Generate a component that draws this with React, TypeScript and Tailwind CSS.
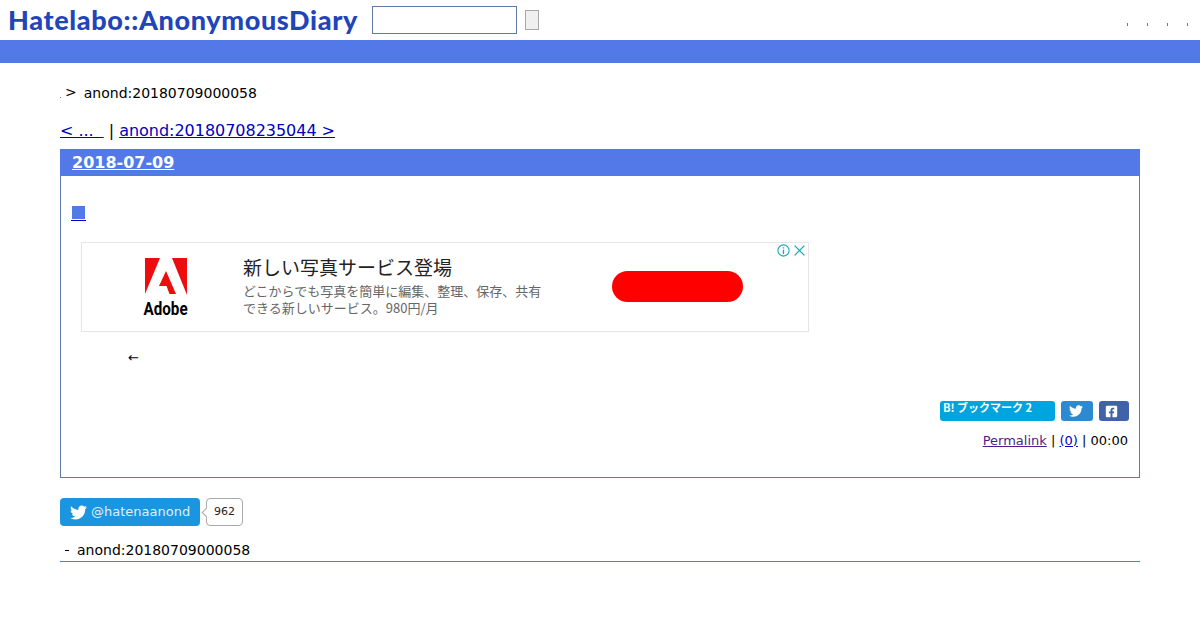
import React from "react";
import { FaTwitter, FaFacebookSquare } from "react-icons/fa";

const sans = "font-['DejaVu_Sans',sans-serif]";

function AdobeLogo() {
  return (
    <svg width="42" height="37" viewBox="0 0 42 37" className="block">
      <path d="M0 0H15L0 36Z" fill="#ee0c0c" />
      <path d="M27 0H42V37Z" fill="#ee0c0c" />
      <path d="M21 13L31 36H24.5L21.5 28H14Z" fill="#ee0c0c" />
    </svg>
  );
}

function InfoX() {
  return (
    <div className="absolute right-[2px] top-[1px] flex items-center gap-[3px]">
      <svg width="13" height="13" viewBox="0 0 12 12" fill="none" stroke="#16a5b8" strokeWidth="1">
        <circle cx="6" cy="6" r="5.2" />
        <path d="M6 5.2V9.2M6 3V4.2" strokeWidth="1.2" />
      </svg>
      <svg width="13" height="13" viewBox="0 0 12 12" fill="none" stroke="#16a5b8" strokeWidth="1.2">
        <path d="M1.5 1.5L10.5 10.5M10.5 1.5L1.5 10.5" />
      </svg>
    </div>
  );
}

export default function App() {
  return (
    <div className={`${sans} w-[1200px] h-[630px] bg-white text-black overflow-hidden`}>
      <header className="h-[40px] flex items-start relative">
        <div className="ml-[8px] mt-[3px] w-[350px] h-[32px] font-['Lato',sans-serif] font-black text-[27px] leading-[34px] tracking-[0.64px] text-[#1f45b8] whitespace-nowrap">
          Hatelabo::AnonymousDiary
        </div>
        <input className="ml-[14px] mt-[6px] w-[145px] h-[28px] bg-white border border-[#5f7aa8] outline-none" />
        <div className="ml-[8px] mt-[10px] w-[14px] h-[20px] bg-[#efefef] border border-[#a8a8a8]" />
        <div className="ml-auto mr-[12px] mt-[23px] flex gap-[19px]">
          <span className="w-px h-[3px] bg-[#777]" />
          <span className="w-px h-[3px] bg-[#777]" />
          <span className="w-px h-[3px] bg-[#777]" />
          <span className="w-px h-[3px] bg-[#777]" />
        </div>
      </header>
      <div className="h-[23px] bg-[#5279e7]" />

      <main className="px-[60px]">
        <div className="mt-[21px] h-[18px] flex items-center text-[14px] leading-[18px]">
          <span className="w-px h-px bg-[#777] mt-[8px]" />
          <span className="ml-[4px] text-[14px] leading-[14px] -mt-[3px]">&gt;</span>
          <span className="ml-[7px]">anond:20180709000058</span>
        </div>

        <div className="mt-[19px] h-[20px] text-[16px] leading-[20px] whitespace-pre tracking-[-0.03px]">
          <a href="#" className="text-[#0000c0] underline">{"< ...  "}</a>
          <span> | </span>
          <a href="#" className="text-[#0000c0] underline">{"anond:20180708235044 >"}</a>
        </div>

        <section className="mt-[8px] h-[329px] border border-[#5f7aa8] relative flex flex-col">
          <h2 className="h-[27px] -mt-px -mx-px bg-[#5279e7] pl-[12px] text-[16px] leading-[27px] font-bold text-white">
            <a href="#" className="underline">2018-07-09</a>
          </h2>
          <div className="mt-[29px] ml-[10px] w-[15px] h-[16px] border-b border-[#0000c0] flex">
            <span className="ml-[1px] mt-[1px] w-[13px] h-[13px] bg-[#5279e7]" />
          </div>

          <div className="relative ml-[20px] mt-[21px] w-[728px] h-[90px] border border-[#e5e5e5] flex items-start font-['Noto_Sans_CJK_JP',sans-serif]">
            <InfoX />
            <div className="ml-[63px] mt-[15px] w-[42px] flex flex-col items-center">
              <AdobeLogo />
              <span className="mt-[4px] font-['Roboto',sans-serif] font-bold text-[19px] leading-[19px] scale-x-[0.8]">Adobe</span>
            </div>
            <div className="ml-[56px] mt-[11px] flex flex-col">
              <span className="text-[19px] leading-[26px] text-[#222]">新しい写真サービス登場</span>
              <span className="w-[310px] mt-[2px] text-[13px] leading-[17px] text-[#666]">どこからでも写真を簡単に編集、整理、保存、共有できる新しいサービス。980円/月</span>
            </div>
            <div className="ml-[59px] mt-[28px] w-[131px] h-[31px] rounded-[15.5px] bg-[#ff0000]" />
          </div>

          <div className="mt-[16px] ml-[67px] h-[20px] text-[13px] leading-[20px]">←</div>

          <div className="mt-[33px] mr-[10px] flex justify-end gap-[6px]">
            <div className="w-[115px] h-[20px] rounded-[3px] bg-[#00a4de] text-white text-[11px] leading-[13px] font-bold pl-[3px] font-['Noto_Sans_CJK_JP',sans-serif] whitespace-nowrap">
              B! ブックマーク 2
            </div>
            <div className="w-[32px] h-[20px] rounded-[3px] bg-[#2b8ad0] text-white flex items-center justify-center text-[14px] pr-[2px]">
              <FaTwitter />
            </div>
            <div className="w-[30px] h-[20px] rounded-[3px] bg-[#3f62a8] text-white flex items-center justify-center text-[13px] pr-[5px]">
              <FaFacebookSquare />
            </div>
          </div>

          <div className="mt-[10px] mr-[11px] text-right text-[13px] leading-[20px]">
            <a href="#" className="text-[#551a8b] underline">Permalink</a>
            <span> | </span>
            <a href="#" className="text-[#0000c0] underline">(0)</a>
            <span> | 00:00</span>
          </div>
        </section>

        <div className="mt-[20px] flex items-center h-[28px]">
          <div className="w-[140px] h-[28px] rounded-[4px] bg-[#1b95e0] flex items-center text-[13px] text-[#dff0fb]">
            <FaTwitter className="ml-[10px] text-[17px] text-white" />
            <span className="ml-[4px]">@hatenaanond</span>
          </div>
          <div className="relative ml-[6px] w-[37px] h-[28px] rounded-[4px] bg-white border border-[#a8a8a8] flex items-center justify-center text-[11px] text-[#222]">
            <span className="absolute -left-[4px] top-[10px] w-[7px] h-[7px] bg-white border-l border-b border-[#a8a8a8] rotate-45" />
            962
          </div>
        </div>

        <div className="mt-[14px] h-[20px] border-b border-[#4f83b8] box-content flex items-center text-[14px] leading-[20px] pb-[1px]">
          <span className="ml-[5px] w-[4px] h-px bg-black" />
          <span className="ml-[8px]">anond:20180709000058</span>
        </div>
      </main>
    </div>
  );
}
